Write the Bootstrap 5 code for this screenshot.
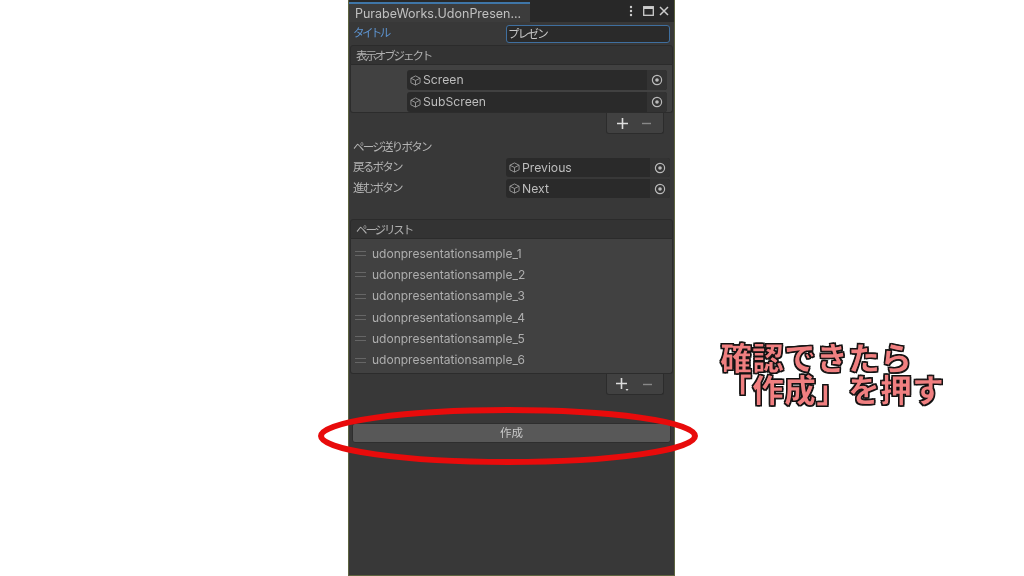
<!DOCTYPE html>
<html lang="ja">
<head>
<meta charset="utf-8">
<title>PurabeWorks</title>
<link href="https://cdn.jsdelivr.net/npm/bootstrap@5.3.0/dist/css/bootstrap.min.css" rel="stylesheet">
<style>
html,body{height:100%;margin:0;background:#fff;overflow:hidden}
body{font-family:"Inter","Noto Sans CJK JP",sans-serif;position:relative}
.stage{height:576px;padding-left:348px}
.win{width:327px;height:576px;background:#383838;border:1px solid #5e6440;border-width:0 1px 1px 1px;color:#b4b4b4;font-size:12px;line-height:1;font-family:"Inter","Noto Sans CJK JP",sans-serif;filter:blur(.4px)}
.jp{font-size:11.5px;letter-spacing:-1.75px;white-space:nowrap}
.tabbar{height:22px;background:#282828;padding-top:2px}
.wtab{width:181px;height:20px;background:#3c3c3c;border-top:2px solid #3f76a8;color:#c0c0c0;font-size:12.5px;padding:2px 0 0 6px;white-space:nowrap}
.wicons{padding:0 5px 2px 0}
.ic-dots{margin-right:10px}
.ic-max{margin-right:5px}
.row-f{height:19px;padding:0 4px 0 4px;margin-top:2px}
.lab{width:153px;flex:none;padding-top:1px}
.lab-blue{color:#5d93cf;letter-spacing:-2.6px}
.tinput{width:165px;height:18px;background:#2a2a2a;border:1px solid #3f6f9f;border-radius:3px;padding:2px 0 0 1px;color:#c8c8c8}
.sec-h{height:20px;margin:0 1px;background:#333;border:1px solid #2b2b2b;border-radius:3px 3px 0 0;padding:3px 0 0 5px;color:#b0b0b0;letter-spacing:-2.1px}
.sec-a{margin-top:2px}
.sec-b{margin-top:21px}
.lst{margin:0 1px;background:#414141;border:1px solid #2c2c2c;border-top:0;border-radius:0 0 3px 3px}
.lst-a{height:48px;padding:5px 5px 0 56px}
.objf{height:20px;background:#2a2a2a;border-radius:3px;color:#bdbdbd;font-size:12.2px;padding-left:3px;overflow:hidden}
.objf+.objf{margin-top:2px}
.objf-n{flex:1;padding:1px 0 0 2px;white-space:nowrap}
.pick{width:20px;height:100%;background:#333;flex:none}
.foot-w{padding-right:10px}
.foot{width:58px;height:21px;background:#414141;border:1px solid #2c2c2c;border-top:0;border-radius:0 0 3px 3px;gap:14px;color:#ddd}
.foot svg:first-child{margin-left:-3px}
.pg-t{height:17px;padding:1px 4px 0;margin-top:5px}
.f2{width:165px;height:19px}
.lst-b{height:135px;padding-top:4px}
.pgrow{height:21.3px;padding-left:4px;font-size:12px;color:#aeaeae;gap:6px;white-space:nowrap}
.grip{width:11px;height:5px;border-top:1px solid #666;border-bottom:1px solid #666;flex:none}
.mk{width:319px;height:20px;margin:28px 0 0 3px;padding-top:2px;background:#585858;border:1px solid #2e2e2e;border-radius:3px;color:#c8c8c8;font-size:11.5px}
.ring{position:absolute;left:318px;top:407px;width:380px;height:58px;filter:blur(.4px)}
.note{position:absolute;left:720px;top:340px;width:240px;font-family:"Noto Sans CJK JP",sans-serif;font-weight:900;font-size:32px;line-height:32px;color:#f07f80;-webkit-text-stroke:1px #111;text-shadow:1px 1px 0 #111,-1px 1px 0 #111,1px -1px 0 #111,-1px -1px 0 #111;white-space:nowrap;filter:blur(.4px)}
</style>
</head>
<body>
<svg width="0" height="0" class="position-absolute"><defs>
<symbol id="cube" viewBox="0 0 12 12"><path d="M6 1 11 3.5V8.5L6 11 1 8.5V3.5ZM1 3.5 6 6 11 3.5M6 6V11" fill="none" stroke="#9a9a9a" stroke-width="1"/></symbol>
<symbol id="tgt" viewBox="0 0 12 12"><circle cx="6" cy="6" r="4.6" fill="none" stroke="#bbb" stroke-width="1.2"/><circle cx="6" cy="6" r="1.8" fill="#bbb"/></symbol>
</defs></svg>
<div class="stage">
<div class="win d-flex flex-column">
  <div class="tabbar d-flex justify-content-between">
    <div class="wtab d-flex align-items-center">PurabeWorks.UdonPresen...</div>
    <div class="wicons d-flex align-items-center">
      <svg class="ic-dots" width="4" height="12" viewBox="0 0 4 12"><circle cx="2" cy="2" r="1.2" fill="#ccc"/><circle cx="2" cy="6" r="1.2" fill="#ccc"/><circle cx="2" cy="10" r="1.2" fill="#ccc"/></svg>
      <svg class="ic-max" width="11" height="10" viewBox="0 0 11 10"><rect x=".7" y=".7" width="9.6" height="8.6" fill="none" stroke="#ccc" stroke-width="1.3"/><path d="M.7 2h9.6" stroke="#ccc" stroke-width="2"/></svg>
      <svg width="10" height="10" viewBox="0 0 10 10"><path d="M1 1 9 9M9 1 1 9" stroke="#ccc" stroke-width="1.5"/></svg>
    </div>
  </div>
  <div class="row-f d-flex align-items-center"><div class="lab lab-blue jp">タイトル</div><div class="tinput jp d-flex align-items-center">プレゼン</div></div>
  <div class="sec-h sec-a jp d-flex align-items-center">表示オブジェクト</div>
  <div class="lst lst-a">
    <div class="objf d-flex align-items-center"><svg width="11" height="11"><use href="#cube"/></svg><span class="objf-n">Screen</span><span class="pick d-flex align-items-center justify-content-center"><svg width="12" height="12"><use href="#tgt"/></svg></span></div>
    <div class="objf d-flex align-items-center"><svg width="11" height="11"><use href="#cube"/></svg><span class="objf-n">SubScreen</span><span class="pick d-flex align-items-center justify-content-center"><svg width="12" height="12"><use href="#tgt"/></svg></span></div>
  </div>
  <div class="foot-w d-flex justify-content-end"><div class="foot d-flex align-items-center justify-content-center">
    <svg width="11" height="11" viewBox="0 0 11 11"><path d="M5.5 0V11M0 5.5H11" stroke="#ddd" stroke-width="1.6"/></svg>
    <svg width="9" height="9" viewBox="0 0 9 9"><path d="M0 4.5H9" stroke="#888" stroke-width="1.4"/></svg>
  </div></div>
  <div class="pg-t jp d-flex align-items-center">ページ送りボタン</div>
  <div class="row-f d-flex align-items-center"><div class="lab jp">戻るボタン</div><div class="objf f2 d-flex align-items-center"><svg width="11" height="11"><use href="#cube"/></svg><span class="objf-n">Previous</span><span class="pick d-flex align-items-center justify-content-center"><svg width="12" height="12"><use href="#tgt"/></svg></span></div></div>
  <div class="row-f d-flex align-items-center"><div class="lab jp">進むボタン</div><div class="objf f2 d-flex align-items-center"><svg width="11" height="11"><use href="#cube"/></svg><span class="objf-n">Next</span><span class="pick d-flex align-items-center justify-content-center"><svg width="12" height="12"><use href="#tgt"/></svg></span></div></div>
  <div class="sec-h sec-b jp d-flex align-items-center">ページリスト</div>
  <div class="lst lst-b">
    <div class="pgrow d-flex align-items-center"><span class="grip"></span>udonpresentationsample_1</div>
    <div class="pgrow d-flex align-items-center"><span class="grip"></span>udonpresentationsample_2</div>
    <div class="pgrow d-flex align-items-center"><span class="grip"></span>udonpresentationsample_3</div>
    <div class="pgrow d-flex align-items-center"><span class="grip"></span>udonpresentationsample_4</div>
    <div class="pgrow d-flex align-items-center"><span class="grip"></span>udonpresentationsample_5</div>
    <div class="pgrow d-flex align-items-center"><span class="grip"></span>udonpresentationsample_6</div>
  </div>
  <div class="foot-w d-flex justify-content-end"><div class="foot d-flex align-items-center justify-content-center">
    <svg width="13" height="13" viewBox="0 0 13 13"><path d="M5.5 0V11M0 5.5H11" stroke="#ddd" stroke-width="1.6"/><path d="M9.5 11h3l-1.5 2z" fill="#ddd"/></svg>
    <svg width="9" height="9" viewBox="0 0 9 9"><path d="M0 4.5H9" stroke="#888" stroke-width="1.4"/></svg>
  </div></div>
  <div class="mk d-flex align-items-center justify-content-center">作成</div>
</div>
</div>
<svg class="ring" viewBox="0 0 380 58"><ellipse cx="190" cy="29" rx="187" ry="26" fill="none" stroke="#e80b0b" stroke-width="6"/></svg>
<div class="note"><div>確認できたら</div><div>「作成」を押す</div></div>
<script src="https://cdn.jsdelivr.net/npm/bootstrap@5.3.0/dist/js/bootstrap.bundle.min.js"></script>
</body>
</html>
